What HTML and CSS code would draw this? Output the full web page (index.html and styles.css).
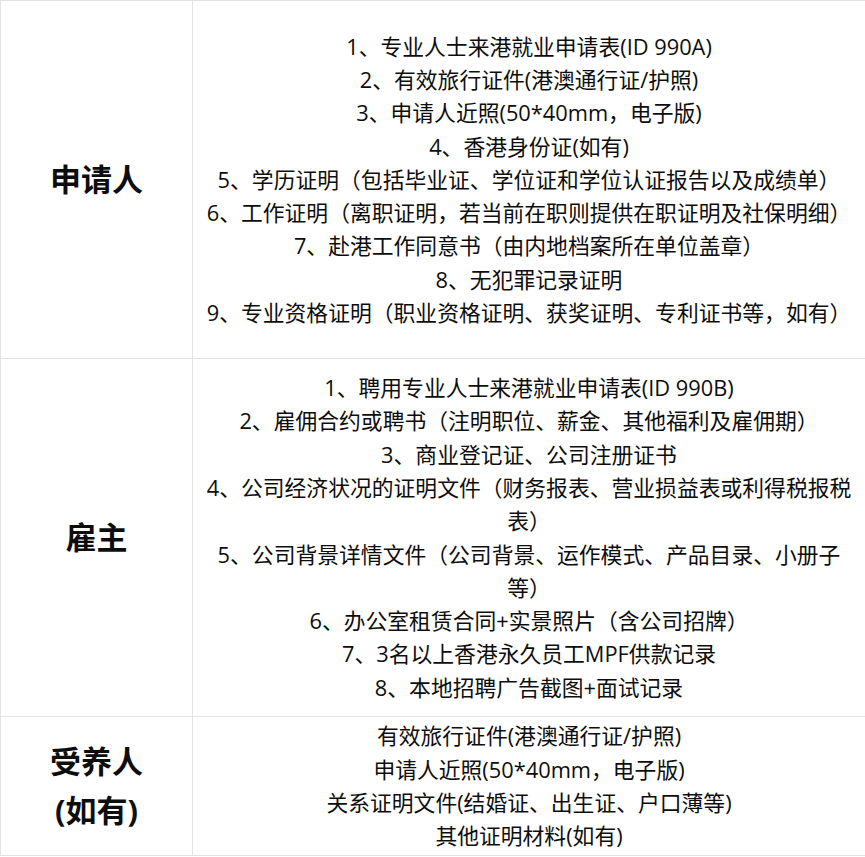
FILE: index.html
```html
<!DOCTYPE html>
<html lang="zh-CN">
<head>
<meta charset="utf-8">
<link rel="stylesheet" href="styles.css">
</head>
<body>
<table class="docs">
  <colgroup><col class="c-head"><col class="c-body"></colgroup>
  <tr class="r1">
    <th>申请人</th>
    <td>
      1、专业人士来港就业申请表(ID 990A)<br>
      2、有效旅行证件(港澳通行证/护照)<br>
      3、申请人近照(50*40mm，电子版)<br>
      4、香港身份证(如有)<br>
      5、学历证明（包括毕业证、学位证和学位认证报告以及成绩单）<br>
      6、工作证明（离职证明，若当前在职则提供在职证明及社保明细）<br>
      7、赴港工作同意书（由内地档案所在单位盖章）<br>
      8、无犯罪记录证明<br>
      9、专业资格证明（职业资格证明、获奖证明、专利证书等，如有）
    </td>
  </tr>
  <tr class="r2">
    <th>雇主</th>
    <td>
      1、聘用专业人士来港就业申请表(ID 990B)<br>
      2、雇佣合约或聘书（注明职位、薪金、其他福利及雇佣期）<br>
      3、商业登记证、公司注册证书<br>
      4、公司经济状况的证明文件（财务报表、营业损益表或利得税报税表）<br>
      5、公司背景详情文件（公司背景、运作模式、产品目录、小册子等）<br>
      6、办公室租赁合同+实景照片（含公司招牌）<br>
      7、3名以上香港永久员工MPF供款记录<br>
      8、本地招聘广告截图+面试记录
    </td>
  </tr>
  <tr class="r3">
    <th>受养人<br>(如有)</th>
    <td>
      有效旅行证件(港澳通行证/护照)<br>
      申请人近照(50*40mm，电子版)<br>
      关系证明文件(结婚证、出生证、户口薄等)<br>
      其他证明材料(如有)
    </td>
  </tr>
</table>
</body>
</html>
```

FILE: styles.css
```css
html, body {
  margin: 0;
  padding: 0;
  background: #ffffff;
}

.docs {
  border-collapse: collapse;
  table-layout: fixed;
  width: 865px;
  font-family: "Open Sans", "Noto Sans CJK SC", sans-serif;
  color: #0d0d0d;
}

.c-head { width: 192px; }
.c-body { width: 673px; }

.docs th,
.docs td {
  border: 1px solid #e3e3e3;
  text-align: center;
  vertical-align: middle;
}

.docs th {
  font-size: 31px;
  font-weight: 700;
  line-height: 49px;
  padding: 0 8px;
}

.docs td {
  font-size: 21.8px;
  line-height: 33.3px;
  padding: 0 10px;
}

.r1 { height: 358px; }
.r2 { height: 358px; }
.r3 { height: 139px; }
```
